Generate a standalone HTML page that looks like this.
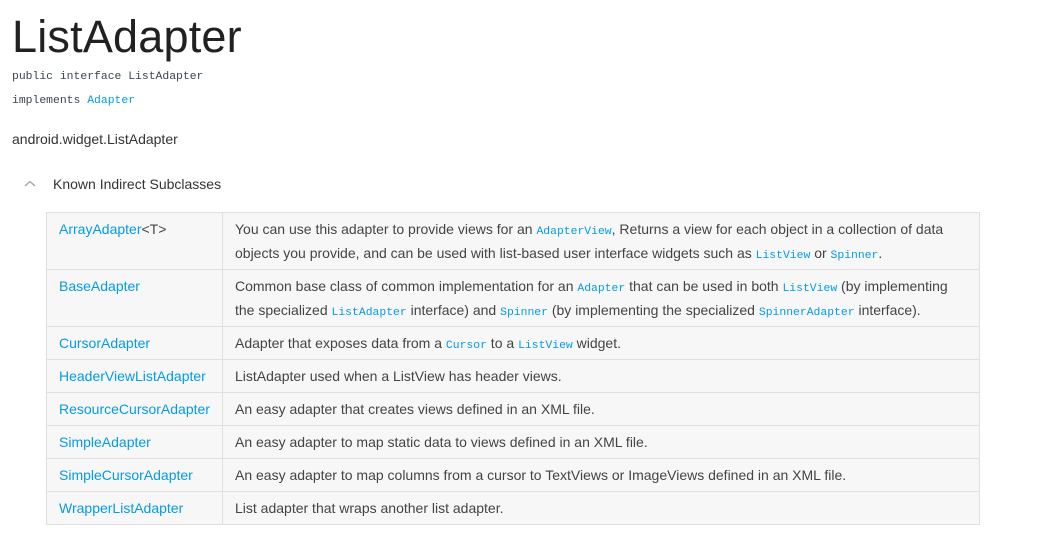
<!DOCTYPE html>
<html><head><meta charset="utf-8"><style>
body{margin:0;background:#fff;font-family:"Liberation Sans",sans-serif;color:#202124;width:1040px;height:547px;overflow:hidden;position:relative}
.a{position:absolute;white-space:nowrap}
h1{position:absolute;left:12px;top:11px;margin:0;font-weight:normal;font-size:45px;line-height:52px;color:#212121;letter-spacing:0.2px}
.m{font-family:"Liberation Mono",monospace;font-size:11.4px;color:#37474f}
a,.l{color:#039be5;text-decoration:none}
code{font-family:"Liberation Mono",monospace;font-size:11.4px;color:#039be5;line-height:0}
table{position:absolute;left:46px;top:212px;border-collapse:collapse;width:934px;font-size:14px;line-height:24px;color:#444}
td{border:1px solid #e0e0e0;background:#f7f7f7;padding:4px 12px;vertical-align:top}
td:first-child{width:151px}
tr.s td{padding-top:4px;padding-bottom:4px;height:24px}
</style></head><body>
<h1>ListAdapter</h1>
<div class="a m" style="left:12px;top:71px">public interface ListAdapter</div>
<div class="a m" style="left:12px;top:95px">implements <span class="l">Adapter</span></div>
<div class="a" style="left:12px;top:131px;font-size:14px;color:#333">android.widget.ListAdapter</div>
<svg class="a" style="left:24px;top:180px" width="12" height="8"><path d="M1 6 L6 1.5 L11 6" fill="none" stroke="#9e9e9e" stroke-width="1.2"/></svg>
<div class="a" style="left:53px;top:176px;font-size:14px;color:#333">Known Indirect Subclasses</div>
<table>
<tr><td><a>ArrayAdapter</a>&lt;T&gt;</td><td>You can use this adapter to provide views for an <code>AdapterView</code>, Returns a view for each object in a collection of data objects you provide, and can be used with list-based user interface widgets such as <code>ListView</code> or <code>Spinner</code>.</td></tr>
<tr><td><a>BaseAdapter</a></td><td>Common base class of common implementation for an <code>Adapter</code> that can be used in both <code>ListView</code> (by implementing the specialized <code>ListAdapter</code> interface) and <code>Spinner</code> (by implementing the specialized <code>SpinnerAdapter</code> interface).</td></tr>
<tr class="s"><td><a>CursorAdapter</a></td><td>Adapter that exposes data from a <code>Cursor</code> to a <code>ListView</code> widget.</td></tr>
<tr class="s"><td><a>HeaderViewListAdapter</a></td><td>ListAdapter used when a ListView has header views.</td></tr>
<tr class="s"><td><a>ResourceCursorAdapter</a></td><td>An easy adapter that creates views defined in an XML file.</td></tr>
<tr class="s"><td><a>SimpleAdapter</a></td><td>An easy adapter to map static data to views defined in an XML file.</td></tr>
<tr class="s"><td><a>SimpleCursorAdapter</a></td><td>An easy adapter to map columns from a cursor to TextViews or ImageViews defined in an XML file.</td></tr>
<tr class="s"><td><a>WrapperListAdapter</a></td><td>List adapter that wraps another list adapter.</td></tr>
</table>
</body></html>
